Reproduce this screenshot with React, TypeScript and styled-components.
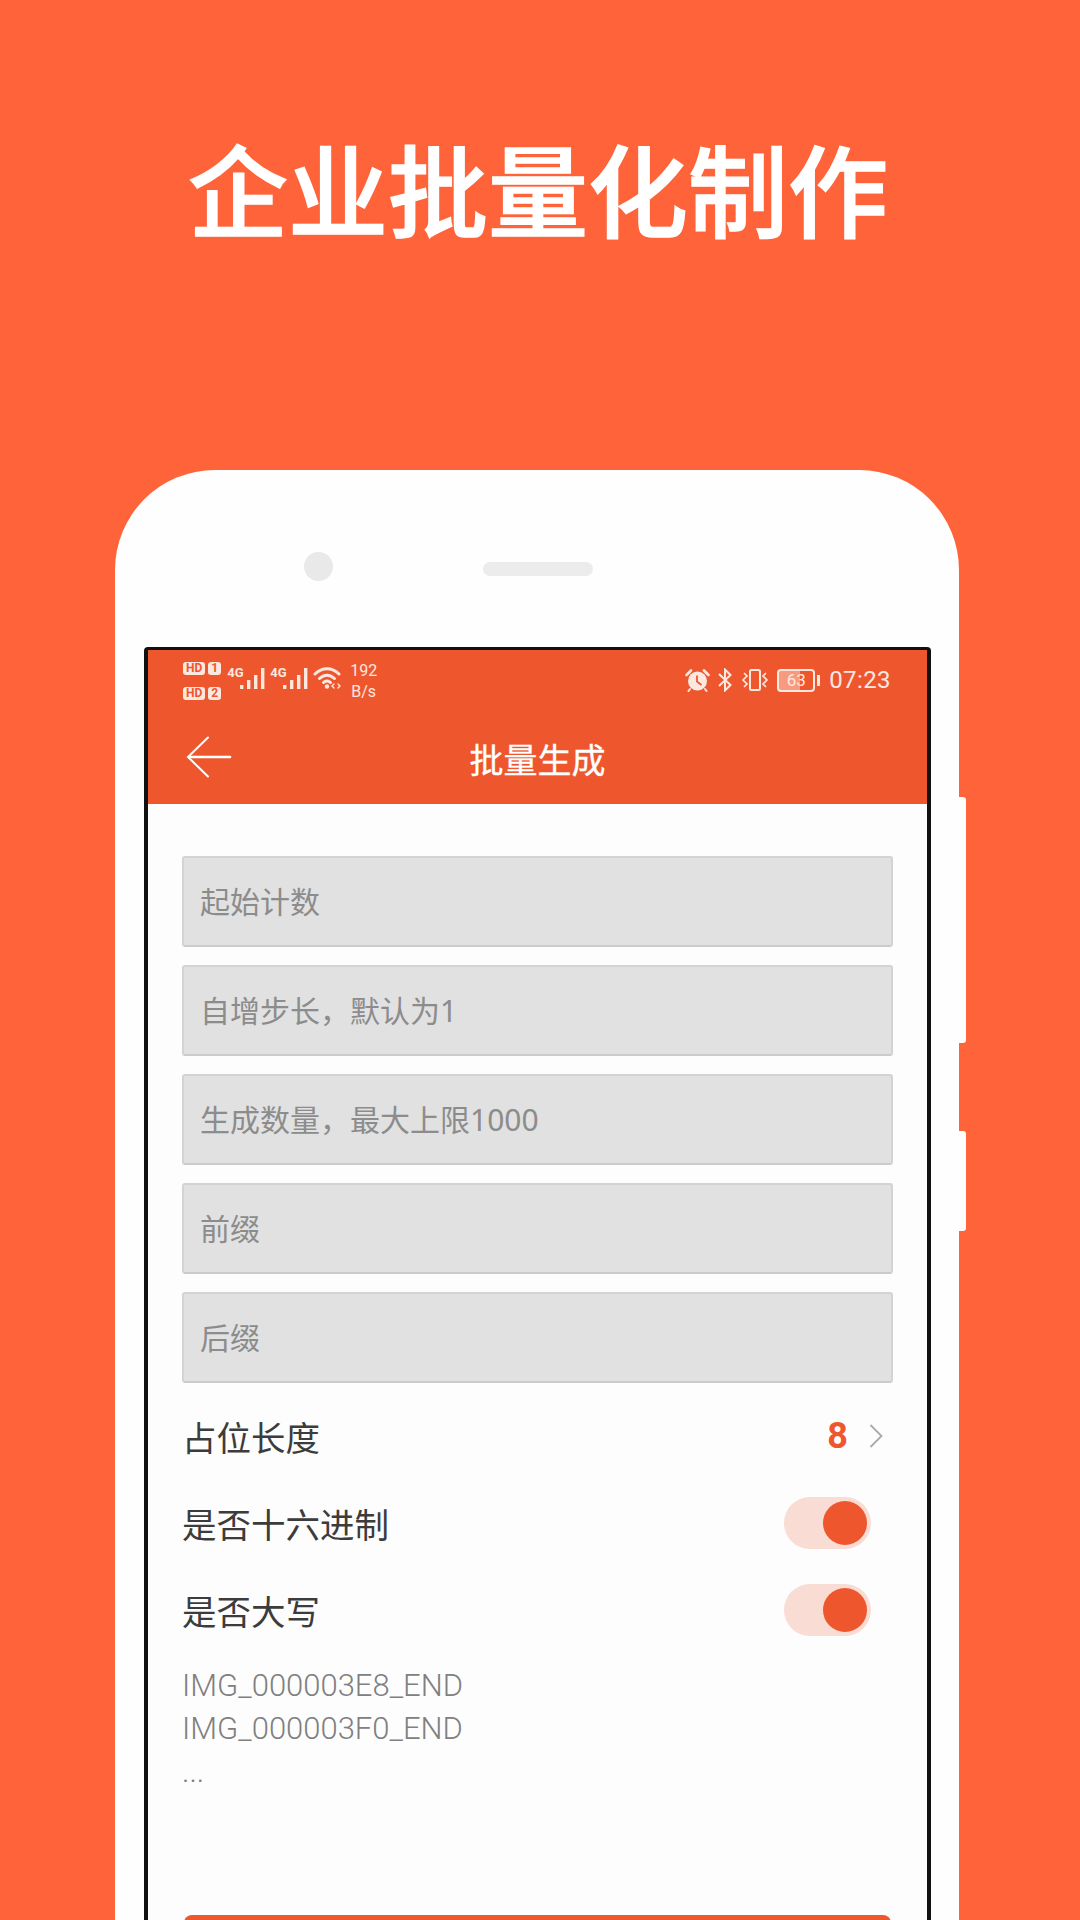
import React from "react";
import styled, { createGlobalStyle } from "styled-components";

const orange = "#ff6339";
const accent = "#ee572e";
const sans = `"Noto Sans CJK SC", "Noto Sans", sans-serif`;
const latin = `Roboto, "Noto Sans CJK SC", sans-serif`;

const GlobalStyle = createGlobalStyle`
  html, body {
    margin: 0;
    padding: 0;
    background: ${orange};
  }
`;

const Page = styled.div`
  width: 1080px;
  height: 1920px;
  overflow: hidden;
  background: ${orange};
  font-family: ${sans};
`;

const Headline = styled.h1`
  margin: 0;
  height: 470px;
  padding: 125px 4px 0 0;
  box-sizing: border-box;
  text-align: center;
  font-size: 100px;
  line-height: 124px;
  font-weight: 500;
  -webkit-text-stroke: 1.5px #fff;
  color: #fff;
`;

const Phone = styled.div`
  position: relative;
  margin-left: 115px;
  width: 844px;
  height: 1450px;
  background: #fefefe;
  border-radius: 100px 100px 0 0;
`;

const SideKey = styled.div<{ $top: number; $height: number }>`
  position: absolute;
  right: -7px;
  top: ${(p) => p.$top}px;
  width: 7px;
  height: ${(p) => p.$height}px;
  background: #fefefe;
  border-radius: 0 3px 3px 0;
`;

const Sensors = styled.div`
  height: 177px;
  box-sizing: border-box;
  padding: 82px 0 0 189px;
  display: flex;
  align-items: flex-start;
  gap: 150px;
`;

const Camera = styled.div`
  width: 29px;
  height: 29px;
  border-radius: 50%;
  background: #e9e9e9;
`;

const Speaker = styled.div`
  margin-top: 10px;
  width: 110px;
  height: 14px;
  border-radius: 7px;
  background: #ececec;
`;

const Screen = styled.div`
  margin-left: 29px;
  width: 787px;
  height: 1273px;
  box-sizing: border-box;
  border: solid #111;
  border-width: 3px 4px 0;
  border-radius: 4px 4px 0 0;
  background: #fdfdfd;
`;

const StatusBar = styled.div`
  height: 62px;
  box-sizing: border-box;
  padding: 10px 36px 0 35px;
  background: ${accent};
  color: #fde8e0;
  display: flex;
  align-items: flex-start;
  justify-content: space-between;
`;

const StatusGroup = styled.div`
  display: flex;
  align-items: center;
`;

const RightStatus = styled(StatusGroup)`
  margin-top: 5px;
`;

const SimColumn = styled.div`
  display: flex;
  flex-direction: column;
  gap: 12px;
  margin-right: 6px;
`;

const SimRow = styled.div`
  display: flex;
  gap: 3px;
`;

const SimBadge = styled.span`
  height: 13px;
  padding: 0 3px;
  border-radius: 3px;
  background: #fde8e0;
  color: ${accent};
  font-family: ${latin};
  font-size: 12px;
  line-height: 13px;
  font-weight: 700;
`;

const Network = styled.div`
  position: relative;
  width: 38px;
  height: 26px;
  margin: 0 5px 8px 0;
`;

const NetworkLabel = styled.span`
  position: absolute;
  left: 0;
  top: 2px;
  font-family: "Liberation Sans Narrow", ${latin};
  font-size: 13px;
  line-height: 13px;
  font-weight: 700;
`;

const BarsIcon = styled.svg`
  position: absolute;
  right: 0;
  bottom: 0;
`;

const WifiIcon = styled.svg`
  margin-bottom: 6px;
`;

const Speed = styled.div`
  margin-left: 7px;
  font-family: ${latin};
  font-size: 16px;
  line-height: 21px;
  text-align: center;
`;

const BatteryBody = styled.div`
  width: 38px;
  height: 23px;
  box-sizing: border-box;
  border: 2px solid #fde8e0;
  border-radius: 4px;
  display: flex;
  align-items: center;
  justify-content: center;
  font-family: ${latin};
  font-size: 17px;
  color: #fde8e0;
  background: linear-gradient(90deg, #f79b80 0 62%, transparent 62%);
`;

const BatteryCap = styled.div`
  width: 3px;
  height: 11px;
  margin: 0 9px 0 2px;
  background: #fde8e0;
`;

const Clock = styled.span`
  font-family: ${latin};
  font-size: 24px;
  line-height: 30px;
  letter-spacing: 0.4px;
`;

const NavBar = styled.div`
  position: relative;
  height: 92px;
  background: ${accent};
  display: flex;
  align-items: center;
  justify-content: center;
  color: #fff;
  font-size: 34px;
  font-weight: 400;
  -webkit-text-stroke: 0.3px #fff;
`;

const BackIcon = styled.svg`
  position: absolute;
  left: 38px;
  top: 24px;
`;

const Form = styled.div`
  padding: 52px 34px 0;
  display: flex;
  flex-direction: column;
`;

const Fields = styled.div`
  display: flex;
  flex-direction: column;
  gap: 18px;
`;

const Field = styled.div`
  height: 91px;
  box-sizing: border-box;
  padding: 0 0 4px 16px;
  display: flex;
  align-items: center;
  background: #e1e1e1;
  border: 2px solid #d3d3d3;
  border-bottom-color: #cbcbcb;
  border-radius: 3px;
  color: #8c8c8c;
  font-family: "Noto Sans", "Noto Sans CJK SC", sans-serif;
  font-size: 30px;
  font-weight: 400;
`;

const Row = styled.div`
  height: 87px;
  display: flex;
  align-items: center;
  justify-content: space-between;
  color: #3c3c3c;
  font-size: 34.5px;
  font-weight: 400;
`;

const FirstRow = styled(Row)`
  margin-top: 9px;
  padding: 0 10px 0 0;
`;

const Value = styled.div`
  display: flex;
  align-items: center;
  gap: 21px;
  color: ${accent};
  font-family: ${latin};
  font-size: 36px;
  font-weight: 700;
`;

const Toggle = styled.div`
  position: relative;
  width: 87px;
  height: 52px;
  margin-right: 22px;
  border-radius: 26px;
  background: #f9dcd3;
`;

const Knob = styled.div`
  position: absolute;
  right: 4px;
  top: 4px;
  width: 44px;
  height: 44px;
  border-radius: 50%;
  background: ${accent};
`;

const Preview = styled.div`
  margin-top: 11px;
  font-family: ${latin};
  font-size: 31px;
  line-height: 43px;
  font-weight: 300;
  color: #808080;
`;

const SubmitButton = styled.div`
  margin: 122px 2px 0;
  height: 100px;
  border-radius: 8px;
  background: ${accent};
`;

function Bars() {
  return (
    <BarsIcon width="25" height="22" viewBox="0 0 25 22" fill="#fde8e0">
      <rect x="0" y="17" width="3.4" height="4" />
      <rect x="7" y="12" width="3.4" height="9" />
      <rect x="14" y="7" width="3.4" height="14" />
      <rect x="21" y="0" width="3.4" height="21" />
    </BarsIcon>
  );
}

function Wifi() {
  return (
    <WifiIcon width="30" height="24" viewBox="0 0 30 24" fill="none" stroke="#fde8e0" strokeWidth="3" strokeLinecap="round">
      <path d="M2 8 C9 1 19 1 26 8" />
      <path d="M6.5 12.5 C11 8 17 8 21.5 12.5" />
      <path d="M10.5 16.5 C12.5 14.5 15.5 14.5 17.5 16.5" />
      <circle cx="14" cy="20.5" r="2.2" fill="#fde8e0" stroke="none" />
      <path d="M21 18 l-2 2 2 2 M25 18 l2 2 -2 2" strokeWidth="1.4" />
    </WifiIcon>
  );
}

function Alarm() {
  return (
    <svg width="25" height="23" viewBox="0 0 25 23">
      <circle cx="12.5" cy="12" r="9.5" fill="#fde8e0" />
      <path d="M1.5 6 L6 1.5 M23.5 6 L19 1.5" stroke="#fde8e0" strokeWidth="2.6" strokeLinecap="round" />
      <path d="M5 20 L3.5 22 M20 20 L21.5 22" stroke="#fde8e0" strokeWidth="2" strokeLinecap="round" />
      <path d="M12 6.5 V12.5 L16.5 16" fill="none" stroke={accent} strokeWidth="1.8" />
    </svg>
  );
}

function Bluetooth() {
  return (
    <svg width="14" height="24" viewBox="0 0 14 24" fill="none" stroke="#fde8e0" strokeWidth="2" style={{ margin: "0 9px 0 8px" }}>
      <path d="M1 6 L12.5 17 L7 22.5 V1.5 L12.5 7 L1 18" />
    </svg>
  );
}

function Vibrate() {
  return (
    <svg width="28" height="24" viewBox="0 0 28 24" fill="none" stroke="#fde8e0" strokeWidth="2" style={{ marginRight: 8 }}>
      <rect x="9" y="2" width="10" height="20" rx="1.5" />
      <path d="M3 5 L6 8 L2 12 L6 16 L3 19" strokeWidth="1.7" />
      <path d="M25 5 L22 8 L26 12 L22 16 L25 19" strokeWidth="1.7" />
    </svg>
  );
}

function Chevron() {
  return (
    <svg width="14" height="24" viewBox="0 0 14 24" fill="none" stroke="#a9a9a9" strokeWidth="1.8">
      <path d="M1.5 1 L12.5 12 L1.5 23" />
    </svg>
  );
}

const placeholders = ["起始计数", "自增步长，默认为1", "生成数量，最大上限1000", "前缀", "后缀"];
const switches = ["是否十六进制", "是否大写"];

export default function App() {
  return (
    <Page>
      <GlobalStyle />
      <Headline>企业批量化制作</Headline>
      <Phone>
        <SideKey $top={327} $height={246} />
        <SideKey $top={661} $height={100} />
        <Sensors>
          <Camera />
          <Speaker />
        </Sensors>
        <Screen>
          <StatusBar>
            <StatusGroup>
              <SimColumn>
                <SimRow>
                  <SimBadge>HD</SimBadge>
                  <SimBadge>1</SimBadge>
                </SimRow>
                <SimRow>
                  <SimBadge>HD</SimBadge>
                  <SimBadge>2</SimBadge>
                </SimRow>
              </SimColumn>
              <Network>
                <NetworkLabel>4G</NetworkLabel>
                <Bars />
              </Network>
              <Network>
                <NetworkLabel>4G</NetworkLabel>
                <Bars />
              </Network>
              <Wifi />
              <Speed>
                192
                <br />
                B/s
              </Speed>
            </StatusGroup>
            <RightStatus>
              <Alarm />
              <Bluetooth />
              <Vibrate />
              <BatteryBody>63</BatteryBody>
              <BatteryCap />
              <Clock>07:23</Clock>
            </RightStatus>
          </StatusBar>
          <NavBar>
            <BackIcon width="46" height="42" viewBox="0 0 46 42" fill="none" stroke="#fff" strokeWidth="2.6" strokeLinecap="round">
              <path d="M22 1.5 L2 21 L22 40.5" strokeWidth="2" />
              <path d="M3 21 H44" />
            </BackIcon>
            批量生成
          </NavBar>
          <Form>
            <Fields>
              {placeholders.map((text) => (
                <Field key={text}>{text}</Field>
              ))}
            </Fields>
            <FirstRow>
              占位长度
              <Value>
                8
                <Chevron />
              </Value>
            </FirstRow>
            {switches.map((label) => (
              <Row key={label}>
                {label}
                <Toggle>
                  <Knob />
                </Toggle>
              </Row>
            ))}
            <Preview>
              IMG_000003E8_END
              <br />
              IMG_000003F0_END
              <br />
              ...
            </Preview>
            <SubmitButton />
          </Form>
        </Screen>
      </Phone>
    </Page>
  );
}
